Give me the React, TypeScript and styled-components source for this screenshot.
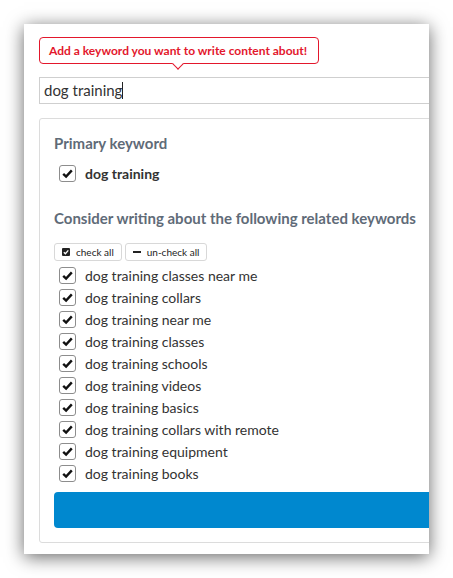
import React from 'react';
import styled, {createGlobalStyle} from 'styled-components';

const GlobalStyle = createGlobalStyle`
  body {
    margin: 0;
    background: #fff;
    font-family: Lato, "Open Sans", sans-serif;
  }
`

const Page = styled.div`
  padding: 24px;
`

const Window = styled.div`
  width: 405px;
  height: 530px;
  box-sizing: border-box;
  overflow: hidden;
  background: #fff;
  padding: 13px 0 0 15px;
  box-shadow: 0 3px 17px rgba(0, 0, 0, 0.6);
`

const Content = styled.div`
  width: 470px;
`

const Tooltip = styled.div`
  position: relative;
  display: inline-block;
  box-sizing: border-box;
  height: 27px;
  padding: 0 11px 0 9px;
  border: 1px solid #e3172c;
  border-radius: 4px;
  color: #e3172c;
  font-size: 12px;
  font-weight: 700;
  line-height: 25px;
  margin-bottom: 13px;

  &::after {
    content: "";
    position: absolute;
    left: 134px;
    bottom: -5px;
    width: 7px;
    height: 7px;
    background: #fff;
    border-right: 1px solid #e3172c;
    border-bottom: 1px solid #e3172c;
    transform: rotate(45deg);
  }
`

const KeywordInput = styled.div`
  box-sizing: border-box;
  height: 27px;
  border: 1px solid #cfcfcf;
  padding: 0 4px;
  font-size: 15px;
  line-height: 25px;
  color: #333;
  margin-bottom: 14px;
`

const Caret = styled.span`
  display: inline-block;
  width: 1px;
  height: 17px;
  background: #222;
  vertical-align: -3px;
`

const Card = styled.div`
  border: 1px solid #dcdcdc;
  border-radius: 3px;
  padding: 14px 14px 14px;
`

const Heading = styled.h3<{$gap: number}>`
  margin: 0 0 ${p => p.$gap}px;
  font-size: 15px;
  font-weight: 700;
  color: #5f6b78;
  line-height: 20px;
`

const Row = styled.label<{$bold?: boolean}>`
  display: flex;
  align-items: center;
  gap: 9px;
  height: 22px;
  padding-left: 5px;
  font-size: 14px;
  font-weight: ${p => p.$bold ? 700 : 400};
  color: #333;
`

const Box = styled.span`
  display: flex;
  align-items: center;
  justify-content: center;
  box-sizing: border-box;
  width: 17px;
  height: 17px;
  border: 1px solid #8d8d8d;
  border-radius: 3px;
  background: #fff;
`

const PrimaryBlock = styled.div`
  margin-bottom: 24px;
`

const Toolbar = styled.div`
  display: flex;
  gap: 3px;
  margin-bottom: 3px;
`

const SmallButton = styled.button`
  display: flex;
  align-items: center;
  gap: 6px;
  height: 18px;
  padding: 0 7px;
  border: 1px solid #d8d8d8;
  border-radius: 3px;
  background: #fff;
  font-family: Lato, sans-serif;
  font-size: 10px;
  color: #222;
`

const List = styled.div`
  margin-bottom: 8px;
`

const SubmitButton = styled.div`
  height: 36px;
  border-radius: 4px;
  background: #0088cf;
`

const Check = () => (
    <Box>
        <svg width="13" height="13" viewBox="0 0 13 13">
            <path d="M2.2 6.8 L5.1 9.6 L10.8 3.4" fill="none" stroke="#111" strokeWidth="2.4"/>
        </svg>
    </Box>
)

const keywords = [
    "dog training classes near me",
    "dog training collars",
    "dog training near me",
    "dog training classes",
    "dog training schools",
    "dog training videos",
    "dog training basics",
    "dog training collars with remote",
    "dog training equipment",
    "dog training books",
]

const App = () => {
    return (
        <Page>
            <GlobalStyle/>
            <Window>
                <Content>
                    <Tooltip>Add a keyword you want to write content about!</Tooltip>
                    <KeywordInput>dog training<Caret/></KeywordInput>
                    <Card>
                        <Heading $gap={9}>Primary keyword</Heading>
                        <PrimaryBlock>
                            <Row $bold><Check/>dog training</Row>
                        </PrimaryBlock>
                        <Heading $gap={15}>Consider writing about the following related keywords</Heading>
                        <Toolbar>
                            <SmallButton>
                                <svg width="8" height="8" viewBox="0 0 8 8">
                                    <rect width="8" height="8" rx="1" fill="#222"/>
                                    <path d="M1.8 4.2 L3.4 5.7 L6.3 2.4" fill="none" stroke="#fff" strokeWidth="1.3"/>
                                </svg>
                                check all
                            </SmallButton>
                            <SmallButton>
                                <svg width="8" height="8" viewBox="0 0 8 8">
                                    <rect y="3" width="8" height="2" fill="#222"/>
                                </svg>
                                un-check all
                            </SmallButton>
                        </Toolbar>
                        <List>
                            {keywords.map(k => <Row key={k}><Check/>{k}</Row>)}
                        </List>
                        <SubmitButton/>
                    </Card>
                </Content>
            </Window>
        </Page>
    );
};

export default App;
